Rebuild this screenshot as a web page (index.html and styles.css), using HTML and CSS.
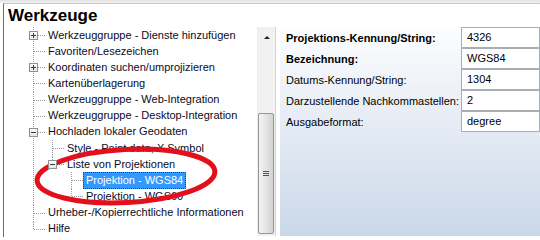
FILE: index.html
```html
<html>
    <head>
        <title>Werkzeuge</title>
        <meta charset="utf-8">
        <link rel="stylesheet" href="styles.css">
    </head>
    <body>
        <div class="strip"></div>
        <div class="window">
            <div class="title">Werkzeuge</div>
            <div class="content">
                <div class="tree">
                    <div class="rows">
                        <div class="row"><span class="g t"><i class="box plus"></i></span><span class="lbl">Werkzeuggruppe - Dienste hinzufügen</span></div>
                        <div class="row"><span class="g t"></span><span class="lbl">Favoriten/Lesezeichen</span></div>
                        <div class="row"><span class="g t"><i class="box plus"></i></span><span class="lbl">Koordinaten suchen/umprojizieren</span></div>
                        <div class="row"><span class="g t"></span><span class="lbl">Kartenüberlagerung</span></div>
                        <div class="row"><span class="g t"></span><span class="lbl">Werkzeuggruppe - Web-Integration</span></div>
                        <div class="row"><span class="g t"></span><span class="lbl">Werkzeuggruppe - Desktop-Integration</span></div>
                        <div class="row"><span class="g t"><i class="box"></i></span><span class="lbl">Hochladen lokaler Geodaten</span></div>
                        <div class="row"><span class="g v"></span><span class="g t"></span><span class="lbl">Style - Point data, X Symbol</span></div>
                        <div class="row"><span class="g v"></span><span class="g l"><i class="box"></i></span><span class="lbl">Liste von Projektionen</span></div>
                        <div class="row"><span class="g v"></span><span class="g"></span><span class="g t"></span><span class="lbl sel">Projektion - WGS84</span></div>
                        <div class="row"><span class="g v"></span><span class="g"></span><span class="g l"></span><span class="lbl">Projektion - WGS60</span></div>
                        <div class="row"><span class="g t"></span><span class="lbl">Urheber-/Kopierrechtliche Informationen</span></div>
                        <div class="row"><span class="g l"></span><span class="lbl">Hilfe</span></div>
                    </div>
                    <div class="scroll">
                        <div class="arrow"></div>
                        <div class="thumb"><span class="grip"></span></div>
                    </div>
                </div>
                <div class="props">
                    <div class="prop"><span class="key strong">Projektions-Kennung/String:</span><span class="val">4326</span></div>
                    <div class="prop"><span class="key strong">Bezeichnung:</span><span class="val">WGS84</span></div>
                    <div class="prop"><span class="key">Datums-Kennung/String:</span><span class="val">1304</span></div>
                    <div class="prop"><span class="key">Darzustellende Nachkommastellen:</span><span class="val">2</span></div>
                    <div class="prop"><span class="key">Ausgabeformat:</span><span class="val">degree</span></div>
                </div>
            </div>
        </div>
        <svg class="mark" width="540" height="240" viewBox="0 0 540 240">
            <ellipse cx="126" cy="176" rx="89" ry="26.5" transform="rotate(-3 126 176)" fill="none" stroke="#e3101c" stroke-width="5"/>
        </svg>
    </body>
</html>
```

FILE: styles.css
```css
body {margin:0;width:540px;height:240px;overflow:hidden;background:#fff;color:#000;font-family:"Liberation Sans", Arial, sans-serif;font-size:11px;position:relative;}
.strip {height:3px;background:linear-gradient(#e2e2e2, #f3f3f3);}
.window {margin-left:3px;height:233px;border-left:1px solid #6e6e6e;border-top:1px solid #c6c6c6;}
.title {height:23px;line-height:23px;padding-left:4px;font-size:17px;font-weight:bold;}
.content {display:flex;height:209px;}

.tree {display:flex;width:271px;border-right:1px solid #d4d4d4;}
.rows {flex:1;overflow:hidden;}
.row {display:flex;align-items:center;height:16.15px;padding-left:20px;white-space:nowrap;color:#0a0a1e;}
.g {position:relative;flex:none;width:19px;height:16px;}
.v::before, .t::before, .l::before {content:"";position:absolute;left:9px;top:0;bottom:0;border-left:1px dotted #9a9a9a;}
.v::before, .t::before {bottom:-1px;}
.l::before {bottom:8px;}
.t::after, .l::after {content:"";position:absolute;left:10px;right:-2px;top:8px;border-top:1px dotted #9a9a9a;}
.box {position:absolute;z-index:1;left:5px;top:4px;width:7px;height:7px;border:1px solid #919191;background:linear-gradient(#fff, #e6e6e6);}
.box::before {content:"";position:absolute;left:1px;top:3px;width:5px;height:1px;background:#3a3a3a;}
.plus::after {content:"";position:absolute;left:3px;top:1px;width:1px;height:5px;background:#3a3a3a;}
.lbl {margin-left:2px;padding:0 2px;line-height:15px;border:1px solid transparent;}
.sel {background:#3399ff;color:#fff;border:1px dotted #4a3a20;}

.scroll {position:relative;width:17px;background:#f1f1f1;border-left:1px solid #ececec;}
.arrow {margin:9px auto 0;width:0;height:0;border-left:3px solid transparent;border-right:3px solid transparent;border-bottom:3px solid #222;}
.thumb {position:absolute;left:0;right:1px;top:86px;bottom:2px;border:1px solid #959595;border-radius:2px;background:linear-gradient(to right, #f4f4f4, #e4e4e4 50%, #d2d2d2);display:flex;align-items:center;justify-content:center;}
.grip {width:6px;height:5px;background:repeating-linear-gradient(#555 0 1px, transparent 1px 2px);}

.props {flex:1;margin-left:4px;background:linear-gradient(#fcfdfe 0%, #e9eef6 40%, #c9d7e8 100%);}
.prop {display:flex;height:21px;}
.key {width:175px;padding-left:6px;line-height:23px;}
.strong {font-weight:bold;}
.val {flex:1;height:19px;line-height:19px;padding-left:5px;border:1px solid #a8aeb6;background:#fff;}

.mark {position:absolute;left:0;top:0;pointer-events:none;}
```
